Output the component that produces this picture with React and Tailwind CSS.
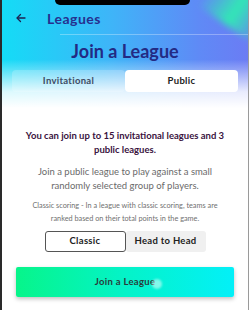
import React from "react";

export default function App() {
  return (
    <div
      className="relative w-[249px] h-[310px] overflow-hidden bg-white flex"
      style={{ fontFamily: "Lato, 'Noto Sans', sans-serif" }}
    >
      <div className="w-[2px] h-full bg-[#2a2a2a] shrink-0" />
      <div className="relative flex-1 h-full flex flex-col overflow-hidden">
        {/* header gradient */}
        <div className="absolute inset-x-0 top-0 h-[108px] bg-[linear-gradient(90deg,#14dcf6_0%,#3fb4f8_45%,#5f8af6_80%,#6b7cf4_100%)]" />
        <div className="absolute inset-x-0 top-0 h-[108px] bg-[linear-gradient(180deg,rgba(255,255,255,0)_0%,rgba(255,255,255,0)_55%,rgba(255,255,255,0.85)_85%,#ffffff_100%)]" />
        <div className="absolute right-[-30px] top-[-30px] w-[70px] h-[60px] rotate-[35deg] bg-[linear-gradient(90deg,rgba(60,255,180,0)_0%,rgba(40,250,170,0.85)_50%,rgba(110,140,255,0)_100%)] blur-[3px]" />
        {/* notch */}
        <div className="absolute left-[53px] top-0 w-[135px] h-[5px] bg-black rounded-b-[6px]" />

        <div className="relative flex flex-col">
          {/* top bar */}
          <div className="flex items-center h-[34px] pt-[2px]">
            <svg className="ml-[13px]" width="12" height="12" viewBox="0 0 24 24" fill="none" stroke="#1d2251" strokeWidth="2.6" strokeLinecap="round" strokeLinejoin="round">
              <path d="M20 12H5" />
              <path d="M11 5l-7 7 7 7" />
            </svg>
            <span className="ml-[20px] text-[14px] font-bold tracking-[0.5px] text-[#26308f]">Leagues</span>
          </div>
          <div className="ml-[58px] h-px bg-white/30" />
          <div className="text-center text-[18px] font-bold text-[#232a84] mt-[4px] leading-[24px]">
            Join a League
          </div>
          {/* tabs */}
          <div className="mx-[10px] mt-[7px] flex h-[22px]">
            <div className="flex-1 rounded-[4px] bg-white/20 flex items-center justify-center text-[9.5px] font-bold tracking-[0.3px] text-[#3d4a63]">
              Invitational
            </div>
            <div className="flex-1 rounded-[4px] bg-white flex items-center justify-center text-[9.5px] font-bold tracking-[0.3px] text-[#222]">
              Public
            </div>
          </div>
        </div>

        {/* content */}
        <div className="relative flex flex-col items-center mt-[37px] px-[18px]">
          <p className="text-center text-[9.5px] font-bold leading-[14px] text-[#3a1340]">
            You can join up to 15 invitational leagues and 3 public leagues.
          </p>
          <p className="mt-[8px] text-center text-[9.5px] leading-[14px] text-[#6a6a6a] px-[12px]">
            Join a public league to play against a small randomly selected group of players.
          </p>
          <p className="mt-[6px] text-center text-[7.3px] leading-[13px] text-[#707070] px-[4px]">
            Classic scoring - In a league with classic scoring, teams are ranked based on their total points in the game.
          </p>
          <div className="mt-[6px] flex">
            <div className="w-[81px] h-[21px] rounded-[3px] border border-[#555] flex items-center justify-center text-[9.5px] font-bold tracking-[0.3px] text-[#222]">
              Classic
            </div>
            <div className="w-[80px] h-[21px] rounded-[3px] bg-[#f0f0f0] flex items-center justify-center text-[9.5px] font-bold tracking-[0.3px] text-[#222]">
              Head to Head
            </div>
          </div>
        </div>
        <div className="relative mx-[14px] mt-[15px] h-[30px] rounded-[2px] bg-[linear-gradient(90deg,#07f58a_0%,#04f3c8_50%,#03f0f8_100%)] shadow-[0_2px_4px_rgba(0,0,0,0.25)] flex items-center justify-center text-[9.5px] font-bold tracking-[0.3px] text-[#2a3b3a]">
          Join a League
          <div className="absolute left-[136px] top-[12px] w-[10px] h-[10px] rounded-full bg-white/50 blur-[1px]" />
        </div>
      </div>
      <div className="w-px h-full bg-[#9a9a9a] shrink-0" />
    </div>
  );
}
